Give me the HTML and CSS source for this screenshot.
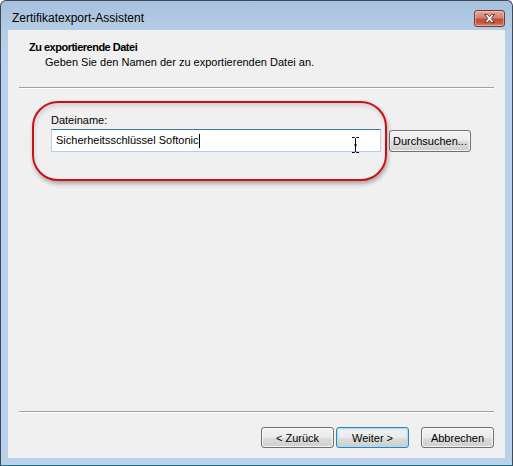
FILE: index.html
```html
<!DOCTYPE html>
<html lang="de">
<head>
<meta charset="utf-8">
<title>Zertifikatexport-Assistent</title>
<link rel="stylesheet" href="styles.css">
</head>
<body>
<div class="window">
  <div class="titlebar">
    <span class="title">Zertifikatexport-Assistent</span>
    <div class="close" aria-label="Schließen">
      <svg width="15" height="11" viewBox="0 0 15 11">
        <path d="M2.5 1.5 L5.5 1.5 L7.5 3.8 L9.5 1.5 L12.5 1.5 L9.2 5.5 L12.5 9.5 L9.5 9.5 L7.5 7.2 L5.5 9.5 L2.5 9.5 L5.8 5.5 Z" fill="#fff" stroke="#5a3a35" stroke-width="1" stroke-linejoin="round"/>
      </svg>
    </div>
  </div>
  <div class="client">
    <div class="header">
      <div class="h-title">Zu exportierende Datei</div>
      <div class="h-sub">Geben Sie den Namen der zu exportierenden Datei an.</div>
    </div>
    <div class="sep"></div>
    <div class="content">
      <div class="field-label">Dateiname:</div>
      <div class="field-row">
        <div class="input">Sicherheitsschlüssel Softonic<span class="caret"></span></div>
        <div class="btn browse">Durchsuchen...</div>
      </div>
      <div class="annotation"></div>
      <svg class="ibeam" width="9" height="16" viewBox="0 0 9 16">
        <path d="M1 0.5 H3.5 L4.5 1.5 L5.5 0.5 H8 M4.5 1.5 V14.5 M1 15.5 H3.5 L4.5 14.5 L5.5 15.5 H8 M3 8 H6" fill="none" stroke="#000" stroke-width="1"/>
      </svg>
    </div>
    <div class="sep sep-bottom"></div>
    <div class="footer">
      <div class="btn">&lt; Zurück</div>
      <div class="btn default">Weiter &gt;</div>
      <div class="btn cancel">Abbrechen</div>
    </div>
  </div>
</div>
</body>
</html>
```
FILE: styles.css
```css
* { box-sizing: border-box; }
html, body { margin: 0; padding: 0; }
body {
  width: 513px;
  height: 466px;
  background: #ffffff;
  font-family: "Liberation Sans", Arial, sans-serif;
  font-size: 12px;
  color: #000;
}
.window {
  width: 513px;
  height: 466px;
  border: 1px solid #3f4a55;
  border-bottom-color: #1f6f80;
  border-radius: 6px 6px 0 0;
  background: linear-gradient(to bottom, #a6c0dd 0px, #b6cde6 30px, #b9d1ea 60px, #b9d1ea 100%);
  display: flex;
  flex-direction: column;
  overflow: hidden;
}
.titlebar {
  height: 29px;
  display: flex;
  justify-content: space-between;
  align-items: flex-start;
  padding: 0 7px 0 11px;
}
.title {
  margin-top: 10px;
  line-height: 14px;
  font-size: 12px;
  color: #000;
}
.close {
  margin-top: 9px;
  width: 31px;
  height: 17px;
  border: 1px solid #6e3c36;
  border-radius: 3px;
  background: linear-gradient(to bottom, #e9a99b 0%, #d77f6f 45%, #c24f3b 55%, #c75a44 80%, #dd8f6d 100%);
  box-shadow: inset 0 0 0 1px rgba(255, 220, 210, 0.45);
  display: flex;
  align-items: center;
  justify-content: center;
}
.close svg { display: block; }
.client {
  margin: 0 7px 7px 7px;
  height: 428px;
  background: #f0f0f0;
  display: flex;
  flex-direction: column;
  font-size: 11px;
}
.header {
  padding: 10px 0 0 21px;
  line-height: 15px;
}
.h-title { font-weight: bold; letter-spacing: -0.5px; }
.h-sub { padding-left: 16px; }
.sep {
  margin: 17px 11px 0 11px;
  height: 2px;
  border-top: 1px solid #a0a0a0;
  border-bottom: 1px solid #ffffff;
}
.sep-bottom { margin-top: auto; }
.content {
  position: relative;
  padding: 24px 0 0 43px;
}
.field-label {
  line-height: 15px;
  height: 16px;
}
.field-row {
  display: flex;
  align-items: flex-start;
  gap: 8px;
}
.input {
  width: 330px;
  height: 23px;
  background: #fff;
  border: 1px solid #b5cfe7;
  border-top-color: #3d7bad;
  padding: 0 0 0 4px;
  line-height: 21px;
  white-space: nowrap;
  display: flex;
  align-items: center;
}
.caret {
  display: inline-block;
  width: 1px;
  height: 14px;
  background: #000;
  margin-left: 1px;
}
.btn {
  width: 73px;
  height: 21px;
  border: 1px solid #707070;
  border-radius: 3px;
  background: linear-gradient(to bottom, #f2f2f2 0%, #ebebeb 50%, #dddddd 51%, #cfcfcf 100%);
  box-shadow: inset 0 0 0 1px rgba(255, 255, 255, 0.75);
  display: flex;
  align-items: center;
  justify-content: center;
  line-height: 14px;
  white-space: nowrap;
}
.browse {
  width: 82px;
  height: 22px;
  margin-top: 1px;
}
.annotation {
  position: absolute;
  left: 24px;
  top: 12px;
  width: 355px;
  height: 80px;
  border: 2.5px solid #c8101a;
  border-radius: 26px;
  box-shadow: 1px 3px 4px rgba(0, 0, 0, 0.3), inset 1px 3px 4px rgba(0, 0, 0, 0.12);
  pointer-events: none;
}
.ibeam {
  position: absolute;
  left: 343px;
  top: 48px;
}
.footer {
  display: flex;
  justify-content: flex-end;
  gap: 2px;
  padding: 14px 11px 10px 0;
}
.btn.default {
  border-color: #3c7fb1;
  box-shadow: inset 0 0 0 1px #a9e1f7, inset 0 0 2px 1px rgba(130, 200, 240, 0.5);
}
.btn.cancel { margin-left: 10px; }
```
